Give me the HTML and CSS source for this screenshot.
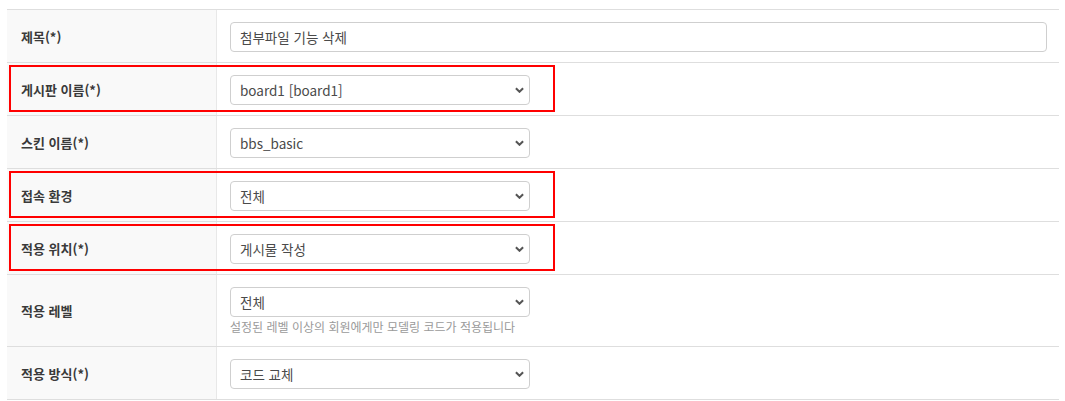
FILE: index.html
```html
<!DOCTYPE html>
<html lang="ko">
<head>
<meta charset="utf-8">
<link rel="stylesheet" href="styles.css">
</head>
<body>
<div class="form">
  <div class="row">
    <div class="label">제목(*)</div>
    <div class="field"><input class="input wide" type="text" value="첨부파일 기능 삭제"></div>
  </div>
  <div class="row marked">
    <div class="label">게시판 이름(*)</div>
    <div class="field"><div class="select"><span>board1 [board1]</span><svg viewBox="0 0 10 6" class="chev"><path d="M1 1l4 4 4-4" fill="none" stroke="#555" stroke-width="2.2"/></svg></div></div>
  </div>
  <div class="row">
    <div class="label">스킨 이름(*)</div>
    <div class="field"><div class="select"><span>bbs_basic</span><svg viewBox="0 0 10 6" class="chev"><path d="M1 1l4 4 4-4" fill="none" stroke="#555" stroke-width="2.2"/></svg></div></div>
  </div>
  <div class="row marked">
    <div class="label">접속 환경</div>
    <div class="field"><div class="select"><span>전체</span><svg viewBox="0 0 10 6" class="chev"><path d="M1 1l4 4 4-4" fill="none" stroke="#555" stroke-width="2.2"/></svg></div></div>
  </div>
  <div class="row marked">
    <div class="label">적용 위치(*)</div>
    <div class="field"><div class="select"><span>게시물 작성</span><svg viewBox="0 0 10 6" class="chev"><path d="M1 1l4 4 4-4" fill="none" stroke="#555" stroke-width="2.2"/></svg></div></div>
  </div>
  <div class="row">
    <div class="label">적용 레벨</div>
    <div class="field"><div class="select"><span>전체</span><svg viewBox="0 0 10 6" class="chev"><path d="M1 1l4 4 4-4" fill="none" stroke="#555" stroke-width="2.2"/></svg></div>
      <p class="help">설정된 레벨 이상의 회원에게만 모델링 코드가 적용됩니다</p></div>
  </div>
  <div class="row">
    <div class="label">적용 방식(*)</div>
    <div class="field"><div class="select"><span>코드 교체</span><svg viewBox="0 0 10 6" class="chev"><path d="M1 1l4 4 4-4" fill="none" stroke="#555" stroke-width="2.2"/></svg></div></div>
  </div>
</div>
</body>
</html>
```

FILE: styles.css
```css
* { box-sizing: border-box; }
html, body { margin: 0; background: #fff; }
body {
  padding: 9px 6px 0 7px;
  font-family: "Noto Sans CJK KR", "Noto Sans", sans-serif;
  color: #333;
}
.form { border-top: 1px solid #dedede; }
.row {
  position: relative;
  display: grid;
  grid-template-columns: 210px 1fr;
  border-bottom: 1px solid #dedede;
}
.marked::after {
  content: "";
  position: absolute;
  left: 2px;
  top: 2px;
  width: 542px;
  bottom: 3px;
  border: 2px solid #f00;
  pointer-events: none;
}
.label {
  background: #f9f9f9;
  border-right: 1px solid #e8e8e8;
  padding-left: 14px;
  display: flex;
  align-items: center;
  font-size: 13px;
  font-weight: bold;
  color: #3a3a3a;
}
.field { padding: 12px 12px 10px 13px; }
.input, .select {
  display: flex;
  align-items: center;
  height: 30px;
  border: 1px solid #cfcfcf;
  border-radius: 4px;
  padding: 0 9px;
  font-family: inherit;
  font-size: 13.5px;
  color: #4a4a4a;
  background: #fff;
}
.input { width: 100%; outline: none; }
.select { width: 300px; justify-content: space-between; }
.chev { width: 9px; height: 6px; margin-right: -4px; }
.help {
  margin: 3px 0 2px;
  font-size: 12px;
  color: #9a9a9a;
  line-height: 14px;
}
```
